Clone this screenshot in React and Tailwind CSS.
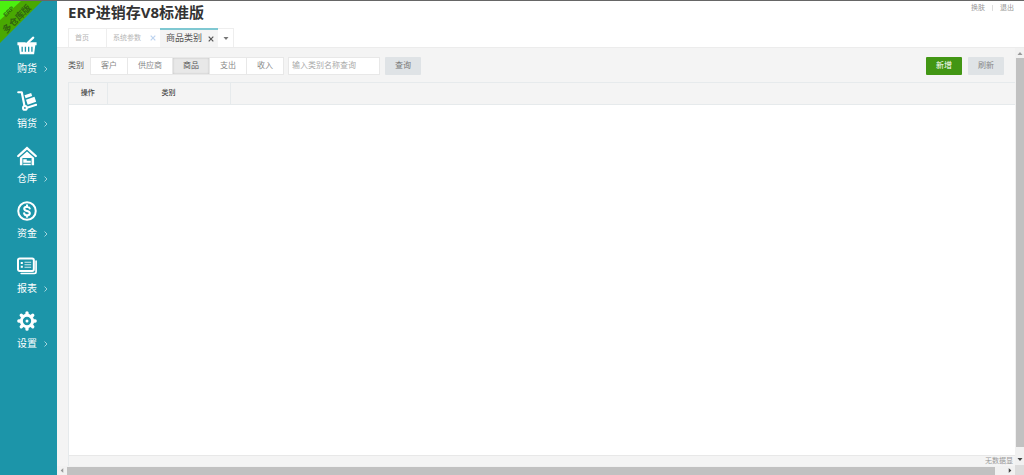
import React, { useState } from 'react';

const BasketIcon = () => (
    <svg viewBox="0 0 24 24" className="h-5 w-5" fill="none" stroke="currentColor" aria-hidden="true">
        <path fill="currentColor" stroke="none" fillRule="evenodd" d="M.500 7.500h9.500l2 2 2-2h9.500v3.700H22L20.500 22h-17L2 11.200H.500V7.500zM5.400 13v6H7v-6zm3.900 0v6h1.600v-6zm3.900 0v6h1.600v-6zm3.900 0v6h1.600v-6z" />
        <path strokeWidth="2.600" strokeLinecap="round" d="M12 9 19.500 2" />
    </svg>
);

const TrolleyIcon = () => (
    <svg viewBox="0 0 24 24" className="h-5 w-5" fill="none" stroke="currentColor" aria-hidden="true">
        <path strokeWidth="2.600" strokeLinecap="round" strokeLinejoin="round" d="M1.500 1.500h4.200L9 18M12 20l11-3.500" />
        <circle cx="9.500" cy="20.300" r="2.300" strokeWidth="2.400" />
        <path fill="currentColor" stroke="none" d="M9 5l8-2.700 1.200 3.700-7.900 2.700zM10.800 10.500l10.200-3.500 2 6-10.200 3.500z" />
    </svg>
);

const WarehouseIcon = () => (
    <svg viewBox="0 0 24 24" className="h-5 w-5" fill="none" stroke="currentColor" aria-hidden="true">
        <path strokeWidth="2.800" strokeLinecap="round" d="M1.500 12 12 2.500 22.500 12" />
        <path fill="currentColor" stroke="none" fillRule="evenodd" d="M12 6.500l8.500 7.500v9h-3v-8.500h-11V23h-3v-9z" />
        <path fill="currentColor" stroke="none" d="M7.500 15.800h4.200v2h4.800V20h-9zM7.500 21.200h9V23h-9z" />
    </svg>
);

const MoneyIcon = () => (
    <svg viewBox="0 0 24 24" className="h-5 w-5" fill="none" stroke="currentColor" aria-hidden="true">
        <circle cx="12" cy="12" r="10.500" strokeWidth="2.400" />
        <path strokeWidth="2.500" strokeLinecap="round" d="M15.300 9c-.5-1.600-1.700-2.200-3.300-2.200-2 0-3.300 1-3.300 2.500 0 3.600 6.700 1.800 6.700 5.500 0 1.600-1.400 2.500-3.400 2.500-1.800 0-3.100-.8-3.500-2.500M12 5v2M12 17v2" />
    </svg>
);

const ReportIcon = () => (
    <svg viewBox="0 0 24 24" className="h-5 w-5" fill="none" stroke="currentColor" aria-hidden="true">
        <rect x="1.200" y="3" width="19" height="15" rx="2" strokeWidth="2.400" />
        <path strokeWidth="2" strokeLinecap="round" d="M22.900 6v13q0 2-2 2H5" />
        <path strokeWidth="2.400" d="M4.500 8.500H7M4.500 13H7" />
        <path strokeWidth="1.300" opacity=".8" d="M9 7.500h8M9 10.500h8M9 13.500h8" />
    </svg>
);

const GearIcon = () => (
    <svg viewBox="0 0 24 24" className="h-5 w-5" fill="none" stroke="currentColor" aria-hidden="true">
        <circle cx="12" cy="12" r="6.800" strokeWidth="3.600" />
        <circle cx="12" cy="12" r="1.800" fill="currentColor" stroke="none" />
        <path strokeWidth="4" strokeLinecap="round" d="M12 2.200v2M12 19.800v2M2.200 12h2M19.800 12h2M5.100 5.100l1.400 1.400M17.500 17.500l1.400 1.400M5.100 18.900l1.400-1.400M17.500 6.500l1.400-1.400" />
    </svg>
);

const menu = [
    { label: '购货', icon: BasketIcon },
    { label: '销货', icon: TrolleyIcon },
    { label: '仓库', icon: WarehouseIcon },
    { label: '资金', icon: MoneyIcon },
    { label: '报表', icon: ReportIcon },
    { label: '设置', icon: GearIcon },
];

const categories = ['客户', '供应商', '商品', '支出', '收入'];

const Chevron = () => (
    <svg viewBox="0 0 4 6" className="h-[6px] w-1 opacity-60" fill="none" stroke="currentColor" aria-hidden="true">
        <path d="M.5.5 3 3 .5 5.500" />
    </svg>
);

const CloseIcon = () => (
    <svg viewBox="0 0 6 6" className="h-[6px] w-[6px]" fill="none" stroke="currentColor" strokeWidth="1.200" aria-hidden="true">
        <path d="M.7.7l4.600 4.600M5.300.7.7 5.300" />
    </svg>
);

// Small triangle, pointing down unless rotated
const Arrow = ({ className }) => (
    <svg viewBox="0 0 6 3" className={`h-[3px] w-[6px] ${className}`} fill="currentColor" aria-hidden="true">
        <path d="M.5 0h5L3 3z" />
    </svg>
);

function Sidebar() {
    return (
        <nav className="relative flex w-[57px] shrink-0 flex-col gap-px overflow-hidden bg-[#1c95a9] pt-[30px] text-white">
            <svg viewBox="0 0 42 42" className="absolute left-0 top-0 h-[42px] w-[42px]" aria-hidden="true">
                <path d="M0 0h42L0 42z" fill="#49a802" />
                <path d="M0 0h21L0 19z" fill="#4cf010" />
                <g fill="#2f6410" textAnchor="middle" className="font-['Liberation_Sans','Noto_Sans_CJK_SC',sans-serif]">
                    <text transform="translate(10 12) rotate(-45)" fontSize="6" fontWeight="bold">ERP</text>
                    <text transform="translate(19 20) rotate(-45)" fontSize="9" fontWeight="bold">多仓库版</text>
                </g>
            </svg>
            {menu.map(({ label, icon: Icon }) => (
                <button key={label} type="button" className="block h-[54px] w-full shrink-0 pl-[17px] text-left">
                    <span className="block h-[22px] pt-px"><Icon /></span>
                    <span className="flex items-center gap-[7px] text-[10px] leading-6">
                        {label}
                        <Chevron />
                    </span>
                </button>
            ))}
        </nav>
    );
}

function Header() {
    return (
        <header className="flex h-[46px] shrink-0 items-start justify-between bg-white pl-[11px] pr-[10px]">
            <div>
                <h1 className="h-[27px] text-[15px] font-bold leading-[22px] text-[#333] font-['Open_Sans','Noto_Sans_CJK_SC',sans-serif]">ERP进销存V8标准版</h1>
                <div role="tablist" className="flex h-[19px] border-l border-t border-[#eee] text-[7px] text-[#b5b5b5]">
                    <button type="button" role="tab" aria-selected="false" className="w-[38px] border-r border-[#eee] pl-[6px] text-left">首页</button>
                    <div className="flex w-[53px] items-center justify-between pl-[6px] pr-1">
                        <button type="button" role="tab" aria-selected="false">系统参数</button>
                        <button type="button" aria-label="关闭系统参数" className="text-[#bdd3ef]"><CloseIcon /></button>
                    </div>
                    <div className="-mt-px flex w-[58px] items-center justify-between border-t-2 border-[#7fc8d2] bg-[#f4f4f4] pl-[6px] pr-1 text-[9px] text-[#555]">
                        <button type="button" role="tab" aria-selected="true">商品类别</button>
                        <button type="button" aria-label="关闭商品类别"><CloseIcon /></button>
                    </div>
                    <button type="button" aria-label="更多标签" className="flex w-4 items-center justify-center border-r border-[#eee] text-[#777]"><Arrow className="" /></button>
                </div>
            </div>
            <div className="flex items-center gap-[7px] pt-px text-[7px] leading-3 text-[#999]">
                <a href="#skin">换肤</a>
                <span className="h-[6px] w-px bg-[#ddd]" />
                <a href="#logout">退出</a>
            </div>
        </header>
    );
}

function Toolbar({ category, onChange }) {
    return (
        <div className="flex h-[18px] items-stretch text-[8px]">
            <span className="mr-[6px] flex items-center text-[#555]">类别</span>
            <div className="flex border border-[#e8e8e8] text-[#888]">
                {categories.map((name) => (
                    <button
                        key={name}
                        type="button"
                        aria-pressed={name === category}
                        onClick={() => onChange(name)}
                        className={`border-r border-[#e8e8e8] px-[10px] last:border-r-0 ${name === category ? 'bg-[#e8e8e8] text-[#555] shadow-[inset_0_0_2px_#bbb]' : 'bg-white'}`}
                    >
                        {name}
                    </button>
                ))}
            </div>
            <input
                type="text"
                aria-label="类别名称"
                placeholder="输入类别名称查询"
                className="ml-1 w-[92px] border border-[#e8e8e8] bg-white px-[3px] placeholder:text-[#aaa] outline-none"
            />
            <button type="button" className="ml-[5px] w-9 rounded-[1px] bg-[#dfe3e6] text-[#777]">查询</button>
            <div className="ml-auto flex gap-[6px]">
                <button type="button" className="w-9 rounded-[1px] bg-[#429614] text-white">新增</button>
                <button type="button" className="w-9 rounded-[1px] bg-[#dfe3e6] text-[#888]">刷新</button>
            </div>
        </div>
    );
}

export default function App() {
    const [category, setCategory] = useState('商品');

    return (
        <div className="flex h-screen overflow-hidden border-t border-[#666] bg-[#f4f4f4] font-['Liberation_Serif','Noto_Sans_CJK_SC',serif]">
            <Sidebar />
            <div className="flex min-w-0 flex-1 flex-col">
                <Header />
                <div className="flex min-h-0 flex-1 border-t border-[#ececec]">
                    <main className="flex min-w-0 flex-1 flex-col pl-[11px] pt-[9px]">
                        <div className="pr-[11px]">
                            <Toolbar category={category} onChange={setCategory} />
                        </div>
                        <div className="mt-[7px] flex min-h-0 flex-1 flex-col border-l border-t border-[#e6eaec]">
                            <table className="w-full table-fixed border-collapse text-[7px] text-[#444]">
                                <thead>
                                    <tr className="h-[21px] border-b border-[#e6eaec]">
                                        <th className="w-[38px] border-r border-[#e6eaec] font-medium">操作</th>
                                        <th className="w-[123px] border-r border-[#e6eaec] font-medium">类别</th>
                                        <td />
                                    </tr>
                                </thead>
                            </table>
                            <div className="flex-1 bg-white" />
                            <div className="shrink-0 border-t border-[#e8e8e8] pr-[2px] text-right text-[7px] leading-[10px] text-[#999]">无数据显</div>
                        </div>
                        {/* Horizontal scrollbar */}
                        <div className="-ml-[11px] flex h-[9px] shrink-0 items-center bg-[#f1f1f1]">
                            <span className="flex w-[10px] justify-center text-[#999]"><Arrow className="rotate-90" /></span>
                            <span className="h-2 flex-1 bg-[#c1c1c1]" />
                            <span className="flex w-5 justify-end pr-[2px] text-[#444]"><Arrow className="-rotate-90" /></span>
                        </div>
                    </main>
                    {/* Vertical scrollbar */}
                    <div className="flex w-[9px] shrink-0 flex-col items-center bg-[#f1f1f1]">
                        <span className="flex h-[10px] items-center text-[#999]"><Arrow className="rotate-180" /></span>
                        <span className="w-2 flex-1 bg-[#c1c1c1]" />
                        <span className="flex h-[18px] items-end pb-1 text-[#444]"><Arrow className="" /></span>
                        <span className="h-[10px] w-full bg-[#dcdcdc]" />
                    </div>
                </div>
            </div>
        </div>
    );
}
